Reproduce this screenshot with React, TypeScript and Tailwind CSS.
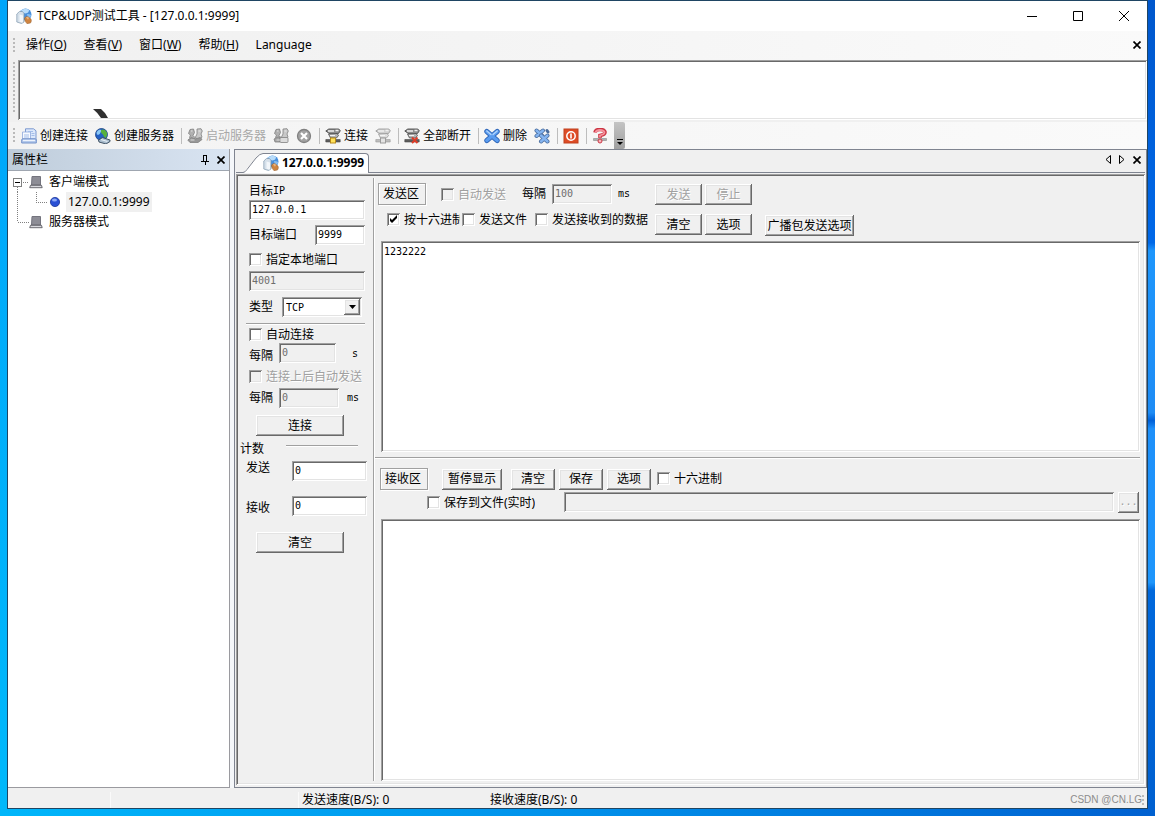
import { useState, type ReactNode } from 'react'
import clsx from 'clsx'

const sunken =
  'shadow-[inset_1px_1px_0_#a0a0a0,inset_-1px_-1px_0_#ffffff,inset_2px_2px_0_#696969,inset_-2px_-2px_0_#e3e3e3]'
const raised =
  'shadow-[inset_-1px_-1px_0_#696969,inset_1px_1px_0_#ffffff,inset_-2px_-2px_0_#a0a0a0,inset_2px_2px_0_#e3e3e3]'
const mono = "font-['DejaVu_Sans_Mono','Noto_Sans_CJK_SC',monospace] text-[10px]"
const disabledText = 'text-[#a0a0a0] [text-shadow:1px_1px_0_#ffffff]'

/* ---------- icons ---------- */

function AppIcon() {
  return (
    <svg width="16" height="16" viewBox="0 0 16 16" className="shrink-0">
      <circle cx="9.500" cy="6.500" r="6" fill="#4a90dc" />
      <path d="M5 2.500q4-3 8-.5q0 3-3.500 3.500q-2.500 0-4.500-3z" fill="#b8dcfa" />
      <path d="M11 6q3.500-.5 4.300 1.500q-.8 2.500-3.300 3z" fill="#86bcf0" />
      <path d="M.8 6l2.700-2.500h3l1.500 2v8.500l-2.500 1.500l-4.700-1.500z" fill="#d5e0ea" stroke="#8098ae" strokeWidth=".7" />
      <path d="M3.500 6.500l3.500 1v7l-3.500-.8z" fill="#f2f6fa" />
      <path d="M8.500 10q2-2.500 4-1l2.500 2q1 2-.5 4l-3.500.7q-2.500-2-2.500-5.700z" fill="#cf8440" stroke="#96602f" strokeWidth=".5" />
      <path d="M10 9.500q1.500-1.500 3 .5l-1 1.800z" fill="#e8b27a" />
    </svg>
  )
}

function NewLinkIcon() {
  return (
    <svg width="16" height="16" viewBox="0 0 16 16" className="shrink-0">
      <path d="M4.500.8h8l2.500 2v10h-10.500z" fill="#dce8fb" stroke="#6f90cc" strokeWidth=".9" />
      <path d="M1.500 4h8v9h-8z" fill="#f6f9ff" stroke="#8fa9da" strokeWidth=".8" />
      <path d="M7 3.500h5M10.500 5.500h3M10.500 7.500h3M3 7h5M3 9h5" stroke="#a3bde8" />
      <path d="M.7 11.500l1.300-.8h12l1.300.8v3.500h-14.600z" fill="#b5caec" stroke="#6a8bc6" strokeWidth=".9" />
      <path d="M2 12.500h12" stroke="#eef4fd" />
    </svg>
  )
}

function GlobeIcon() {
  return (
    <svg width="16" height="16" viewBox="0 0 16 16" className="shrink-0">
      <circle cx="6.500" cy="6.500" r="6" fill="#2460c4" stroke="#163c80" strokeWidth=".8" />
      <path d="M1.500 4.500q1-2.500 3.500-3q2 .5 1 2q-1 3-3 3.500q-1.500-.5-1.500-2.500z" fill="#8cc8f6" />
      <path d="M6 2q4-1.500 6 2.500q.5 3-1 5.500q-2.500-1-3-3.500q-2.500-1.500-2-4.500z" fill="#58b03c" />
      <path d="M3.500 12l4-2.500l7.500 2.500v1.500l-4 2.500l-7-2z" fill="#a9bccd" stroke="#34475a" strokeWidth=".9" />
      <path d="M6 11.500l6.500 2" stroke="#e8f0f6" strokeWidth="1.200" />
    </svg>
  )
}

function UsersGrayIcon({ stop }: { stop?: boolean }) {
  return (
    <svg width="16" height="16" viewBox="0 0 16 16" className="shrink-0" stroke="#808080" strokeWidth=".8">
      <path d="M3 1.500l3.500-.5l1 3.500l-1.500 3l2 2v2h-4l-1.500-2l1-2.500l-2-1.500z" fill="#b0b0b0" />
      <path d="M10 1l4-.3l1.300 2.300l-1.300 3l1 3l-2 2.500h-3.500l-1-2.500l1.500-3z" fill="#c8c8c8" />
      {stop ? (
        <>
          <path d="M1 11l4-2h2v5h-5z" fill="#a4a4a4" />
          <rect x="7" y="9.500" width="8" height="5" rx="1" fill="#dcdcdc" />
        </>
      ) : (
        <path d="M.8 12l3.500-2.500l4 1.500l5-1.500l1.700 2l-4 3h-8z" fill="#989898" />
      )}
      <path d="M4 3h1.500M11.500 3h2M3.500 12h4" stroke="#f0f0f0" />
    </svg>
  )
}

function CancelIcon() {
  return (
    <svg width="16" height="16" viewBox="0 0 16 16" className="shrink-0">
      <circle cx="8" cy="8" r="6.500" fill="#a2a2a2" stroke="#808080" strokeWidth="1.300" />
      <path d="M5 5l6 6M11 5l-6 6" stroke="#ffffff" strokeWidth="2.200" />
    </svg>
  )
}

/* network drive with a badge on it */
function DriveIcon({ kind }: { kind: 'on' | 'off' | 'all' }) {
  const pale = kind === 'off'
  const line = pale ? '#9c9c9c' : '#4c4c4c'

  return (
    <svg width="16" height="16" viewBox="0 0 16 16" className="shrink-0">
      <path d="M.8 3l3-2h10l1.500 1.800l-1.800 2.700l-8.500.5z" fill={pale ? '#cfcfcf' : '#8e8e8e'} stroke={line} strokeWidth=".9" />
      <path d="M3 3h6M10.500 2.500h3" stroke="#efefef" strokeWidth="1.300" />
      <path d="M3.500 6l8.500-.5l1.500 2l-2 2.500h-6z" fill={pale ? '#dedede' : '#b4b4b4'} stroke={line} strokeWidth=".8" />
      <path d="M5 7.500h5" stroke="#f4f4f4" />
      <path d="M.8 11.500h14.400v2.500h-14.400z" fill={pale ? '#bdbdbd' : '#5c5c5c'} stroke={line} strokeWidth=".6" />
      {kind === 'on' && <rect x="5.500" y="10" width="5" height="5" fill="#ffe25a" stroke="#b88a18" />}
      {pale && <rect x="5.500" y="10" width="5" height="5" fill="#e4e4e4" stroke="#9c9c9c" />}
      {kind === 'all' && <path d="M8 9.500l5.500 5.500M13.500 9.500l-5.500 5.500" stroke="#dc3c28" strokeWidth="2" />}
    </svg>
  )
}

function HelpIcon() {
  return (
    <svg width="16" height="16" viewBox="0 0 16 16" className="shrink-0">
      <path d="M1.500 10.500h13v2h-13z" fill="#b0b0b0" stroke="#8a8a8a" strokeWidth=".6" />
      <path d="M3 4.500q.5-3 5-3t5 2.700q0 2.300-5 3.300v2.500" fill="none" stroke="#cc3644" strokeWidth="3.600" />
      <path d="M3.500 4.300q1-2.300 4.500-2.300t4.500 2.200q0 2-4.500 3.300v2" fill="none" stroke="#f5929c" strokeWidth="1.800" />
      <circle cx="8" cy="13" r="2" fill="#f8b4ba" stroke="#cc3644" />
    </svg>
  )
}

function DeleteIcon() {
  return (
    <svg width="16" height="16" viewBox="0 0 16 16" className="shrink-0" strokeLinecap="round">
      <path d="M2.800 3.500l10.400 9M13.200 3.500l-10.400 9" stroke="#2f66b8" strokeWidth="5" />
      <path d="M2.800 3.500l10.400 9M13.200 3.500l-10.400 9" stroke="#5a9cf0" strokeWidth="3.400" />
      <path d="M2.800 3l4.200 3.500M13.200 3l-4.200 3.500" stroke="#b4d6fb" strokeWidth="1.200" />
    </svg>
  )
}

function DeleteAllIcon() {
  return (
    <svg width="16" height="16" viewBox="0 0 16 16" className="shrink-0" strokeLinecap="round">
      <path d="M2.500 2.500l6 5.500M9 2.500l-6.500 5.500" stroke="#4a6c9c" strokeWidth="4" />
      <path d="M2.500 2.500l6 5.500M9 2.500l-6.500 5.500" stroke="#84b4f0" strokeWidth="2.400" />
      <path d="M13 2.500l1 1.500" stroke="#4a6c9c" strokeWidth="3" />
      <path d="M7 7.500l6.500 6M13.500 7.500l-6.500 6" stroke="#4a6c9c" strokeWidth="4" />
      <path d="M7 7.500l6.500 6M13.500 7.500l-6.500 6" stroke="#84b4f0" strokeWidth="2.400" />
    </svg>
  )
}

function PowerIcon() {
  return (
    <svg width="16" height="16" viewBox="0 0 16 16" className="shrink-0">
      <rect x="1" y="1" width="14" height="14" fill="#de4c26" stroke="#c0401e" />
      <circle cx="8" cy="8" r="4.200" fill="none" stroke="#ffffff" strokeWidth="1.500" />
      <path d="M8 5.500v5" stroke="#ffffff" strokeWidth="1.600" />
    </svg>
  )
}

function MonitorIcon() {
  return (
    <svg width="14" height="14" viewBox="0 0 14 14" className="shrink-0">
      <path d="M3 1.500h8.500v8.500h-9z" fill="#8d8d96" stroke="#74747e" />
      <path d="M1.500 10.300h11l.7 2.400h-12.500z" fill="#d9d9de" stroke="#4c4c54" strokeWidth=".8" />
    </svg>
  )
}

function SmallCross() {
  return (
    <svg width="8" height="8" viewBox="0 0 8 8">
      <path d="M.5.5l7 7M7.500.5l-7 7" stroke="#000000" strokeWidth="1.700" />
    </svg>
  )
}

/* ---------- controls ---------- */

function Grip({ className }: { className: string }) {
  return (
    <span
      className={clsx(
        'w-[2px] shrink-0 bg-[repeating-linear-gradient(to_bottom,#bababa_0_2px,transparent_2px_4px)]',
        className
      )}
    />
  )
}

function Btn({ className, disabled, children }: { className?: string; disabled?: boolean; children: ReactNode }) {
  return (
    <button
      disabled={disabled}
      className={clsx(
        'h-[21px] shrink-0 bg-[#f0f0f0] text-center leading-5 whitespace-nowrap',
        raised,
        disabled && disabledText,
        className
      )}
    >
      {children}
    </button>
  )
}

interface FieldProps {
  label: string
  initial: string
  disabled?: boolean
  className?: string
}

function Field({ label, initial, disabled, className }: FieldProps) {
  const [value, setValue] = useState(initial)

  return (
    <input
      type="text"
      aria-label={label}
      value={value}
      disabled={disabled}
      onChange={(e) => setValue(e.target.value)}
      className={clsx(
        'h-5 min-w-0 px-[3px] pb-[2px] outline-none',
        mono,
        sunken,
        disabled ? 'bg-[#f0f0f0] text-[#6d6d6d]' : 'bg-white text-black',
        className
      )}
    />
  )
}

interface CheckProps {
  label: string
  initial?: boolean
  disabled?: boolean
  className?: string
}

function Check({ label, initial = false, disabled, className }: CheckProps) {
  const [checked, setChecked] = useState(initial)

  return (
    <label className={clsx('flex shrink-0 items-center gap-1', disabled && disabledText, className)}>
      <span className="grid shrink-0 *:col-start-1 *:row-start-1">
        <input
          type="checkbox"
          checked={checked}
          disabled={disabled}
          onChange={(e) => setChecked(e.target.checked)}
          className={clsx('size-[13px] appearance-none', sunken, disabled ? 'bg-[#f0f0f0]' : 'bg-white')}
        />
        {checked && (
          <svg width="13" height="13" viewBox="0 0 13 13" className="pointer-events-none">
            <path d="M3 5v3l2 2l5-5v-3l-5 5z" fill="#000000" />
          </svg>
        )}
      </span>
      <span className="overflow-hidden pt-px whitespace-nowrap">{label}</span>
    </label>
  )
}

function ToolButton({ icon, label, disabled }: { icon: ReactNode; label?: string; disabled?: boolean }) {
  return (
    <button
      disabled={disabled}
      className="flex h-6 shrink-0 items-center gap-[3px] px-[3px] whitespace-nowrap disabled:text-[#a8a8a8]"
    >
      {icon}
      {label}
    </button>
  )
}

function ToolSeparator() {
  return <span className="mr-px ml-[3px] h-4 w-px shrink-0 bg-[#bdbdbd]" />
}

/* ---------- page parts ---------- */

function TitleBar() {
  return (
    <header className="flex h-[30px] shrink-0 items-center bg-white pl-2">
      <AppIcon />
      <h1 className="ml-[5px] flex-1 whitespace-nowrap">TCP&amp;UDP测试工具 - [127.0.0.1:9999]</h1>
      <button aria-label="最小化" className="flex h-full w-[46px] items-center justify-center">
        <svg width="10" height="10">
          <path d="M0 5.500h10" stroke="#000000" />
        </svg>
      </button>
      <button aria-label="最大化" className="flex h-full w-[46px] items-center justify-center">
        <svg width="10" height="10">
          <path d="M.5.5h9v9h-9z" fill="none" stroke="#000000" />
        </svg>
      </button>
      <button aria-label="关闭" className="flex h-full w-[46px] items-center justify-center">
        <svg width="10" height="10">
          <path d="M0 0l10 10M10 0l-10 10" stroke="#000000" />
        </svg>
      </button>
    </header>
  )
}

const menus = [
  { text: '操作', key: 'O' },
  { text: '查看', key: 'V' },
  { text: '窗口', key: 'W' },
  { text: '帮助', key: 'H' }
]

function MenuBar() {
  return (
    <nav className="flex h-[29px] shrink-0 items-center bg-linear-to-r from-[#f0f0f0] to-[#fafafa] pr-[6px] pb-[2px] pl-[5px]">
      <Grip className="mr-[11px] h-[14px]" />
      <div className="flex flex-1 gap-[17px]">
        {menus.map((menu) => (
          <button key={menu.key}>
            {menu.text}(<u>{menu.key}</u>)
          </button>
        ))}
        <button>Language</button>
      </div>
      <button aria-label="关闭窗口">
        <SmallCross />
      </button>
    </nav>
  )
}

function ToolBar() {
  return (
    <div className="flex h-[29px] shrink-0 border-t-2 border-[#f0f0f0] bg-linear-to-r from-[#f3f3f3] to-[#fafafa] pl-[5px]">
      <Grip className="mt-[6px] mr-[3px] h-[14px]" />
      <div className="flex items-center gap-px">
        <ToolButton icon={<NewLinkIcon />} label="创建连接" />
        <ToolButton icon={<GlobeIcon />} label="创建服务器" />
        <ToolSeparator />
        <ToolButton icon={<UsersGrayIcon />} label="启动服务器" disabled />
        <ToolButton icon={<UsersGrayIcon stop />} disabled />
        <ToolButton icon={<CancelIcon />} disabled />
        <ToolSeparator />
        <ToolButton icon={<DriveIcon kind="on" />} label="连接" />
        <ToolButton icon={<DriveIcon kind="off" />} disabled />
        <ToolSeparator />
        <ToolButton icon={<DriveIcon kind="all" />} label="全部断开" />
        <ToolSeparator />
        <ToolButton icon={<DeleteIcon />} label="删除" />
        <ToolButton icon={<DeleteAllIcon />} />
        <ToolSeparator />
        <ToolButton icon={<PowerIcon />} />
        <ToolSeparator />
        <ToolButton icon={<HelpIcon />} />
      </div>
      <button
        aria-label="工具栏选项"
        className="ml-[3px] flex w-[11px] items-end justify-center rounded-r-xs bg-linear-to-b from-[#c4c4c4] to-[#a0a0a0] pb-[3px]"
      >
        <svg width="6" height="7" viewBox="0 0 6 7">
          <path d="M0 .5h6" stroke="#000000" />
          <path d="M0 3h6l-3 3z" fill="#000000" />
        </svg>
      </button>
    </div>
  )
}

function SidePanel() {
  return (
    <aside className="flex w-[222px] shrink-0 flex-col border-r border-b border-[#9a9a9f] bg-white">
      <div className="flex h-[22px] shrink-0 items-center border-b border-[#9fa6b0] bg-linear-to-r from-[#bfcddb] to-[#d9e4f2] pt-px pr-1 pl-1">
        <h2 className="flex-1">属性栏</h2>
        <button aria-label="自动隐藏" className="mr-2">
          <svg width="8" height="10" viewBox="0 0 8 10" shapeRendering="crispEdges">
            <path d="M2.500 6v-5.500h3v5.500M0 6.500h8M4 7v3M5 1v5" fill="none" stroke="#000000" />
          </svg>
        </button>
        <button aria-label="关闭属性栏">
          <SmallCross />
        </button>
      </div>
      <ul className="pt-px *:flex *:h-5 *:items-center">
        <li>
          <svg width="21" height="20" shapeRendering="crispEdges" fill="none" stroke="#808080">
            <path d="M5.500 6.500h8v8h-8z" />
            <path d="M7 10.500h5" stroke="#000000" />
            <path d="M15 10.500h6M9.500 15v5" strokeDasharray="1 1" />
          </svg>
          <MonitorIcon />
          <span className="ml-[6px]">客户端模式</span>
        </li>
        <li>
          <svg width="40" height="20" shapeRendering="crispEdges" fill="none" stroke="#808080">
            <path d="M9.500 0v20M28.500 0v10M28 10.500h12" strokeDasharray="1 1" />
          </svg>
          <svg width="14" height="14" viewBox="0 0 14 14">
            <circle cx="7" cy="7" r="4.600" fill="#2a50d4" stroke="#1c3698" strokeWidth=".8" />
            <ellipse cx="6.500" cy="5" rx="2.500" ry="1.500" fill="#8eaaf6" />
          </svg>
          <span className="ml-1 h-5 bg-[#f0f0f0] px-[2px] leading-5">127.0.0.1:9999</span>
        </li>
        <li>
          <svg width="21" height="20" shapeRendering="crispEdges" fill="none" stroke="#808080">
            <path d="M9.500 0v10M10 10.500h11" strokeDasharray="1 1" />
          </svg>
          <MonitorIcon />
          <span className="ml-[6px]">服务器模式</span>
        </li>
      </ul>
    </aside>
  )
}

function TabStrip() {
  return (
    <div className="mx-px flex h-[23px] shrink-0 items-end border-b border-[#7f8490] pr-1 pl-[7px]">
      <svg width="20" height="20" viewBox="0 0 20 20" className="-mb-px shrink-0">
        <path d="M0 20l13-15q4-4.500 7-4.500v19.500z" fill="#ffffff" />
        <path d="M0 19.500q2 0 4-3l9-11.500q4-4.500 7-4.500" fill="none" stroke="#7f8490" />
      </svg>
      <button className="-mb-px flex h-5 items-center gap-[3px] rounded-tr-sm border-t border-r border-[#7f8490] bg-white pr-1 pb-[2px] font-bold whitespace-nowrap">
        <AppIcon />
        127.0.0.1:9999
      </button>
      <div className="mb-2 flex flex-1 items-center justify-end gap-2">
        <button aria-label="上一个">
          <svg width="6" height="9" viewBox="0 0 6 9">
            <path d="M5.500.5v8l-4.500-4z" fill="none" stroke="#000000" />
          </svg>
        </button>
        <button aria-label="下一个">
          <svg width="6" height="9" viewBox="0 0 6 9">
            <path d="M.5.5v8l4.500-4z" fill="none" stroke="#000000" />
          </svg>
        </button>
        <button aria-label="关闭标签">
          <SmallCross />
        </button>
      </div>
    </div>
  )
}

function ConnectionForm() {
  return (
    <form className="flex w-[135px] shrink-0 flex-col pr-2 pl-[11px]" onSubmit={(e) => e.preventDefault()}>
      <div className="flex h-6 items-center pt-[6px]">
        目标<span className={mono}>IP</span>
      </div>
      <Field label="目标IP" initial="127.0.0.1" />
      <div className="flex h-7 items-center justify-between pt-[2px]">
        目标端口
        <Field label="目标端口" initial="9999" className="w-[50px]" />
      </div>
      <Check label="指定本地端口" className="h-[23px]" />
      <Field label="本地端口" initial="4001" disabled />
      <div className="flex h-8 items-center gap-[9px]">
        <label htmlFor="protocol">类型</label>
        <div className="grid w-20 *:col-start-1 *:row-start-1">
          <select id="protocol" className={clsx('h-5 appearance-none bg-white px-1 pt-px', mono, sunken)}>
            <option>TCP</option>
            <option>UDP</option>
          </select>
          <span
            className={clsx(
              'pointer-events-none mr-[2px] flex h-4 w-4 items-center justify-center self-center justify-self-end bg-[#f0f0f0]',
              raised
            )}
          >
            <svg width="7" height="4" viewBox="0 0 7 4">
              <path d="M0 0h7l-3.500 4z" fill="#000000" />
            </svg>
          </span>
        </div>
      </div>
      <hr className="-ml-[3px] h-[2px] shrink-0 border-t border-b border-t-[#a0a0a0] border-b-white" />
      <Check label="自动连接" className="h-[18px]" />
      <div className="flex h-[21px] items-start">
        <span className="self-end">每隔</span>
        <Field label="自动连接间隔" initial="0" disabled className="ml-[6px] w-[57px]" />
        <span className={clsx('ml-4 self-center', mono)}>s</span>
      </div>
      <Check label="连接上后自动发送" disabled className="h-6" />
      <div className="flex h-5 items-center">
        每隔
        <Field label="自动发送间隔" initial="0" disabled className="ml-[6px] w-[60px]" />
        <span className={clsx('ml-2', mono)}>ms</span>
      </div>
      <Btn className="mt-[7px] ml-[7px] w-[88px]">连接</Btn>
      <div className="-ml-[9px] flex h-6 items-center pt-px">
        计数
        <hr className="mr-[7px] mb-[6px] ml-[22px] h-[2px] flex-1 border-t border-b border-t-[#a0a0a0] border-b-white" />
      </div>
      <div className="-mr-[2px] mt-px -ml-[3px] flex justify-between leading-[14px]">
        发送
        <Field label="发送计数" initial="0" className="w-[75px]" />
      </div>
      <div className="-mr-[2px] mt-[15px] -ml-[3px] flex items-end justify-between">
        接收
        <Field label="接收计数" initial="0" className="w-[75px]" />
      </div>
      <Btn className="mt-4 ml-[7px] w-[88px]">清空</Btn>
    </form>
  )
}

function GroupTitle({ children }: { children: ReactNode }) {
  return (
    <h3 className="h-[22px] w-12 shrink-0 border border-[#a0a0a0] pl-1 leading-5 shadow-[1px_1px_0_#ffffff,inset_1px_1px_0_#ffffff]">
      {children}
    </h3>
  )
}

function Workspace() {
  const [sendText, setSendText] = useState('1232222')

  return (
    <section className="flex min-w-0 flex-1 flex-col pb-[2px]">
      <div className="flex h-[65px] shrink-0">
        <div className="w-[280px] shrink-0 pt-[6px]">
          <div className="flex h-6 items-center pl-[3px]">
            <GroupTitle>发送区</GroupTitle>
            <Check label="自动发送" disabled className="ml-[15px]" />
            <span className="ml-4">每隔</span>
            <Field label="发送间隔" initial="100" disabled className="ml-[6px] w-[60px]" />
            <span className={clsx('ml-[6px]', mono)}>ms</span>
          </div>
          <div className="flex h-[26px] items-center pl-3">
            <Check label="按十六进制" initial className="w-[73px]" />
            <Check label="发送文件" className="ml-[2px]" />
            <Check label="发送接收到的数据" className="ml-2" />
          </div>
        </div>
        <div className="grid grid-cols-[47px_47px] content-start gap-x-[3px] gap-y-[9px] pt-2">
          <Btn disabled>发送</Btn>
          <Btn disabled>停止</Btn>
          <Btn>清空</Btn>
          <Btn>选项</Btn>
        </div>
        <Btn className="mb-[5px] ml-[13px] w-[89px] self-end">广播包发送选项</Btn>
      </div>
      <textarea
        aria-label="发送区"
        value={sendText}
        onChange={(e) => setSendText(e.target.value)}
        className={clsx('mr-[3px] ml-[6px] flex-[210] resize-none bg-white px-[3px] py-1 outline-none', mono, sunken)}
      />
      <hr className="mt-[5px] mr-[3px] h-[2px] shrink-0 border-t border-b border-t-[#a0a0a0] border-b-white" />
      <div className="flex h-[60px] shrink-0 flex-col pt-[9px] pr-1">
        <div className="flex h-6 items-start pl-[5px]">
          <GroupTitle>接收区</GroupTitle>
          <Btn className="mt-px ml-[14px] w-[60px]">暂停显示</Btn>
          <Btn className="mt-px ml-[9px] w-11">清空</Btn>
          <Btn className="mt-px ml-1 w-11">保存</Btn>
          <Btn className="mt-px ml-1 w-11">选项</Btn>
          <Check label="十六进制" className="ml-[6px] h-[22px]" />
        </div>
        <div className="flex h-[21px] items-center pl-[52px]">
          <Check label="保存到文件(实时)" className="w-[137px]" />
          <Field label="保存路径" initial="" disabled className="flex-1" />
          <Btn disabled className={clsx('ml-1 w-[21px]', mono)}>
            ...
          </Btn>
        </div>
      </div>
      <textarea
        aria-label="接收区"
        className={clsx('mr-[3px] ml-[6px] flex-[263] resize-none bg-white px-[3px] py-1 outline-none', mono, sunken)}
      />
    </section>
  )
}

function StatusBar() {
  return (
    <footer className="flex h-5 shrink-0 items-center bg-[#f0f0f0] pt-[3px]">
      <span className="h-4 w-[103px] border-r border-[#fafafa]" />
      <span className="h-4 w-[188px] border-r border-[#fafafa]" />
      <span className="w-[188px] pl-[3px]">发送速度(B/S): 0</span>
      <span className="flex-1 pl-[3px]">接收速度(B/S): 0</span>
      <span className="font-['Liberation_Sans',sans-serif] text-[10px] text-[#8c8c8c]">CSDN @CN.LG</span>
      <Grip className="mr-[3px] h-[10px]" />
    </footer>
  )
}

function App() {
  return (
    <div className="flex h-screen flex-col font-['Noto_Sans','Noto_Sans_CJK_SC',sans-serif] text-xs text-black">
      <div className="flex min-h-0 flex-1">
        <div className="w-[7px] shrink-0 bg-linear-to-b from-[#00a5fa] to-[#00b8fb]" />
        <main className="flex min-w-0 flex-1 flex-col border border-[#1f4563] bg-[#f0f0f0]">
          <TitleBar />
          <MenuBar />
          <div className="flex h-[60px] shrink-0 pl-[5px]">
            <Grip className="mt-[2px] mr-[3px] h-[52px]" />
            <div className={clsx('flex flex-1 items-end bg-white pb-[2px] pl-[75px]', sunken)}>
              <svg width="16" height="9" viewBox="0 0 16 9">
                <path d="M0 0h8q4 3 7 9h-7q-3-5-8-9z" fill="#303030" />
              </svg>
            </div>
          </div>
          <ToolBar />
          <div className="flex min-h-0 flex-1 gap-1 bg-[#f5f7fa]">
            <SidePanel />
            <div className="flex min-w-0 flex-1 flex-col border border-[#7f8490] bg-[#f0f0f0]">
              <TabStrip />
              <div className={clsx('mt-px mr-px mb-[2px] ml-px flex min-h-0 flex-1 p-[2px]', sunken)}>
                <ConnectionForm />
                <div className="my-[2px] w-[2px] shrink-0 border-r border-l border-r-white border-l-[#a0a0a0]" />
                <Workspace />
              </div>
            </div>
          </div>
          <StatusBar />
        </main>
        <div className="w-[7px] shrink-0 bg-[linear-gradient(to_bottom,#0057cc_0%,#0068e8_30%,#1e96fc_31%,#1e8cf5_51%,#0060d8_52%,#1e90fa_53%,#1e96fc_72%,#0068dc_73%,#0060d0_100%)]" />
      </div>
      <div className="h-[7px] shrink-0 bg-linear-to-r from-[#00b6fa] via-[#0090ea] via-50% to-[#0060d0]" />
    </div>
  )
}

export default App
